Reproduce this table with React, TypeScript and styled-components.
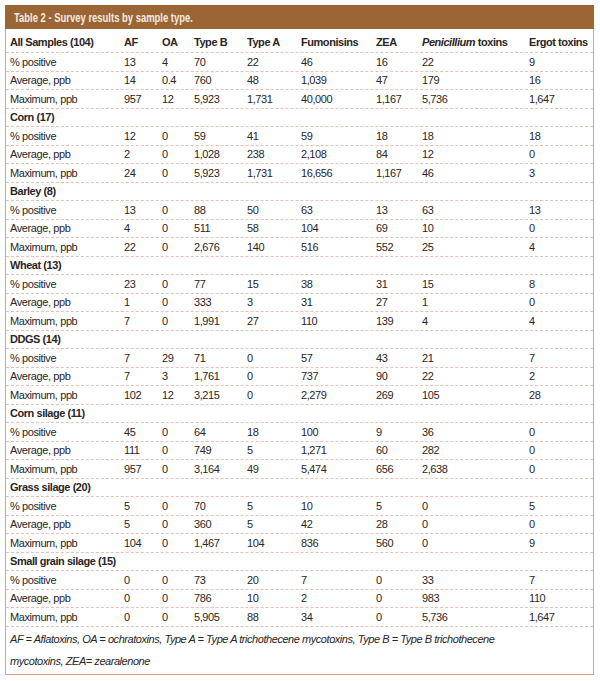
import React from "react";
import styled, { createGlobalStyle } from "styled-components";

const Global = createGlobalStyle`
  html, body { margin: 0; padding: 0; background: #ffffff; }
  body { font-family: "Liberation Sans", Arial, sans-serif; }
`;

const Box = styled.div`
  margin: 5px 0 0 5px;
  width: 589px;
  box-sizing: border-box;
  border: 1px solid #e39a88;
  border-top: none;
  background: #fff;
  color: #2a2525;
`;

const TitleBar = styled.div`
  height: 24px;
  margin: 0 -1px;
  background: #9b6535;
  display: flex;
  align-items: center;
  padding-left: 9px;
  overflow: hidden;
`;

const TitleText = styled.span`
  display: inline-block;
  color: #f6ece0;
  font-weight: 700;
  font-size: 13.5px;
  white-space: nowrap;
  transform: scaleX(0.7);
  transform-origin: left center;
`;

const COLS = "114px 38px 32px 53px 54px 75px 46px 107px 1fr";

const Row = styled.div<{ $head?: boolean }>`
  display: grid;
  grid-template-columns: ${COLS};
  height: ${(p) => (p.$head ? "24px" : "18.5px")};
  align-items: center;
  border-bottom: 1px dashed rgba(214, 140, 125, 0.55);
  box-sizing: border-box;
  font-size: 11px;
  letter-spacing: ${(p) => (p.$head ? "-0.45px" : "-0.4px")};
  font-weight: ${(p) => (p.$head ? 700 : 400)};
  padding-top: ${(p) => (p.$head ? "3px" : "0")};
`;

const Cell = styled.div`
  padding-left: 4px;
  white-space: nowrap;
`;

const GroupRow = styled.div`
  height: 18.5px;
  display: flex;
  align-items: center;
  padding-left: 4px;
  font-size: 11px;
  letter-spacing: -0.45px;
  font-weight: 700;
  border-bottom: 1px dashed rgba(214, 140, 125, 0.55);
  box-sizing: border-box;
`;

const Note = styled.div`
  padding: 1px 0 2px 4px;
  font-size: 11px;
  letter-spacing: -0.45px;
  font-style: italic;
  line-height: 22px;
`;

type Group = { name: string; rows: string[][] };

const LABELS = ["% positive", "Average, ppb", "Maximum, ppb"];

const groups: Group[] = [
  {
    name: "All Samples (104)",
    rows: [
      ["13", "4", "70", "22", "46", "16", "22", "9"],
      ["14", "0.4", "760", "48", "1,039", "47", "179", "16"],
      ["957", "12", "5,923", "1,731", "40,000", "1,167", "5,736", "1,647"],
    ],
  },
  {
    name: "Corn (17)",
    rows: [
      ["12", "0", "59", "41", "59", "18", "18", "18"],
      ["2", "0", "1,028", "238", "2,108", "84", "12", "0"],
      ["24", "0", "5,923", "1,731", "16,656", "1,167", "46", "3"],
    ],
  },
  {
    name: "Barley (8)",
    rows: [
      ["13", "0", "88", "50", "63", "13", "63", "13"],
      ["4", "0", "511", "58", "104", "69", "10", "0"],
      ["22", "0", "2,676", "140", "516", "552", "25", "4"],
    ],
  },
  {
    name: "Wheat (13)",
    rows: [
      ["23", "0", "77", "15", "38", "31", "15", "8"],
      ["1", "0", "333", "3", "31", "27", "1", "0"],
      ["7", "0", "1,991", "27", "110", "139", "4", "4"],
    ],
  },
  {
    name: "DDGS (14)",
    rows: [
      ["7", "29", "71", "0", "57", "43", "21", "7"],
      ["7", "3", "1,761", "0", "737", "90", "22", "2"],
      ["102", "12", "3,215", "0", "2,279", "269", "105", "28"],
    ],
  },
  {
    name: "Corn silage (11)",
    rows: [
      ["45", "0", "64", "18", "100", "9", "36", "0"],
      ["111", "0", "749", "5", "1,271", "60", "282", "0"],
      ["957", "0", "3,164", "49", "5,474", "656", "2,638", "0"],
    ],
  },
  {
    name: "Grass silage (20)",
    rows: [
      ["5", "0", "70", "5", "10", "5", "0", "5"],
      ["5", "0", "360", "5", "42", "28", "0", "0"],
      ["104", "0", "1,467", "104", "836", "560", "0", "9"],
    ],
  },
  {
    name: "Small grain silage (15)",
    rows: [
      ["0", "0", "73", "20", "7", "0", "33", "7"],
      ["0", "0", "786", "10", "2", "0", "983", "110"],
      ["0", "0", "5,905", "88", "34", "0", "5,736", "1,647"],
    ],
  },
];

export default function App() {
  return (
    <>
      <Global />
      <Box>
        <TitleBar>
          <TitleText>Table 2 - Survey results by sample type.</TitleText>
        </TitleBar>
        {groups.map((g, gi) => (
          <React.Fragment key={g.name}>
            {gi === 0 ? (
              <Row $head>
                <Cell>{g.name}</Cell>
                <Cell>AF</Cell>
                <Cell>OA</Cell>
                <Cell>Type B</Cell>
                <Cell>Type A</Cell>
                <Cell>Fumonisins</Cell>
                <Cell>ZEA</Cell>
                <Cell>
                  <i>Penicillium</i> toxins
                </Cell>
                <Cell>Ergot toxins</Cell>
              </Row>
            ) : (
              <GroupRow>{g.name}</GroupRow>
            )}
            {g.rows.map((r, ri) => (
              <Row key={ri}>
                <Cell>{LABELS[ri]}</Cell>
                {r.map((v, vi) => (
                  <Cell key={vi}>{v}</Cell>
                ))}
              </Row>
            ))}
          </React.Fragment>
        ))}
        <Note>
          AF = Aflatoxins, OA = ochratoxins, Type A = Type A trichothecene mycotoxins, Type B = Type B trichothecene
          <br />
          mycotoxins, ZEA= zearalenone
        </Note>
      </Box>
    </>
  );
}
